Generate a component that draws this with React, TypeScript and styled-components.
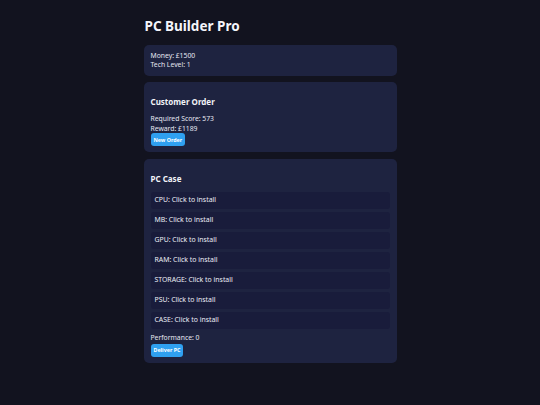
import React from "react";
import styled, { createGlobalStyle } from "styled-components";

const Global = createGlobalStyle`
  html, body { margin: 0; padding: 0; background: #12131f; }
  body { font-family: "Noto Sans", "Open Sans", sans-serif; color: #e6e8f2; }
`;

const Page = styled.div`
  width: 253px;
  margin: 0 auto;
  padding-top: 17px;
  padding-bottom: 20px;
  display: flex;
  flex-direction: column;
  gap: 6.5px;
`;

const Title = styled.h1`
  margin: 0 0 3px 1px;
  font-size: 13.5px;
  line-height: 18px;
  font-weight: 700;
  color: #f4f5fa;
`;

const Card = styled.section`
  background: #1e2340;
  border-radius: 5px;
  padding: 6px 7px;
  display: flex;
  flex-direction: column;
  font-size: 6.8px;
  line-height: 9.5px;
`;

const Heading = styled.h3`
  margin: 8px 0 7px;
  font-size: 8px;
  line-height: 11px;
  font-weight: 700;
  color: #f2f3f8;
`;

const Line = styled.div<{ $mt?: number }>`
  margin-top: ${(p) => p.$mt ?? 0}px;
`;

const Button = styled.button<{ $mt?: number }>`
  align-self: flex-start;
  border: none;
  border-radius: 3px;
  background: #2fa0f0;
  color: #fff;
  font-family: inherit;
  font-weight: 700;
  font-size: 5.3px;
  height: 13px;
  padding: 0 3px;
  cursor: pointer;
  margin-top: ${(p) => p.$mt ?? 0}px;
`;

const Slots = styled.div`
  display: flex;
  flex-direction: column;
  gap: 3px;
  margin-top: 1px;
`;

const Slot = styled.div`
  height: 17px;
  background: #191c3b;
  border-radius: 3px;
  display: flex;
  align-items: center;
  padding: 0 4px;
  font-size: 6.9px;
  color: #eceef6;
`;

const parts = ["CPU", "MB", "GPU", "RAM", "STORAGE", "PSU", "CASE"];

export default function App() {
  return (
    <>
      <Global />
      <Page>
        <Title>PC Builder Pro</Title>
        <Card>
          <Line>Money: £1500</Line>
          <Line>Tech Level: 1</Line>
        </Card>
        <Card>
          <Heading>Customer Order</Heading>
          <Line>Required Score: 573</Line>
          <Line>Reward: £1189</Line>
          <Button>New Order</Button>
        </Card>
        <Card>
          <Heading>PC Case</Heading>
          <Slots>
            {parts.map((p) => (
              <Slot key={p}>{p}: Click to install</Slot>
            ))}
          </Slots>
          <Line $mt={4}>Performance: 0</Line>
          <Button $mt={1.5}>Deliver PC</Button>
        </Card>
      </Page>
    </>
  );
}
